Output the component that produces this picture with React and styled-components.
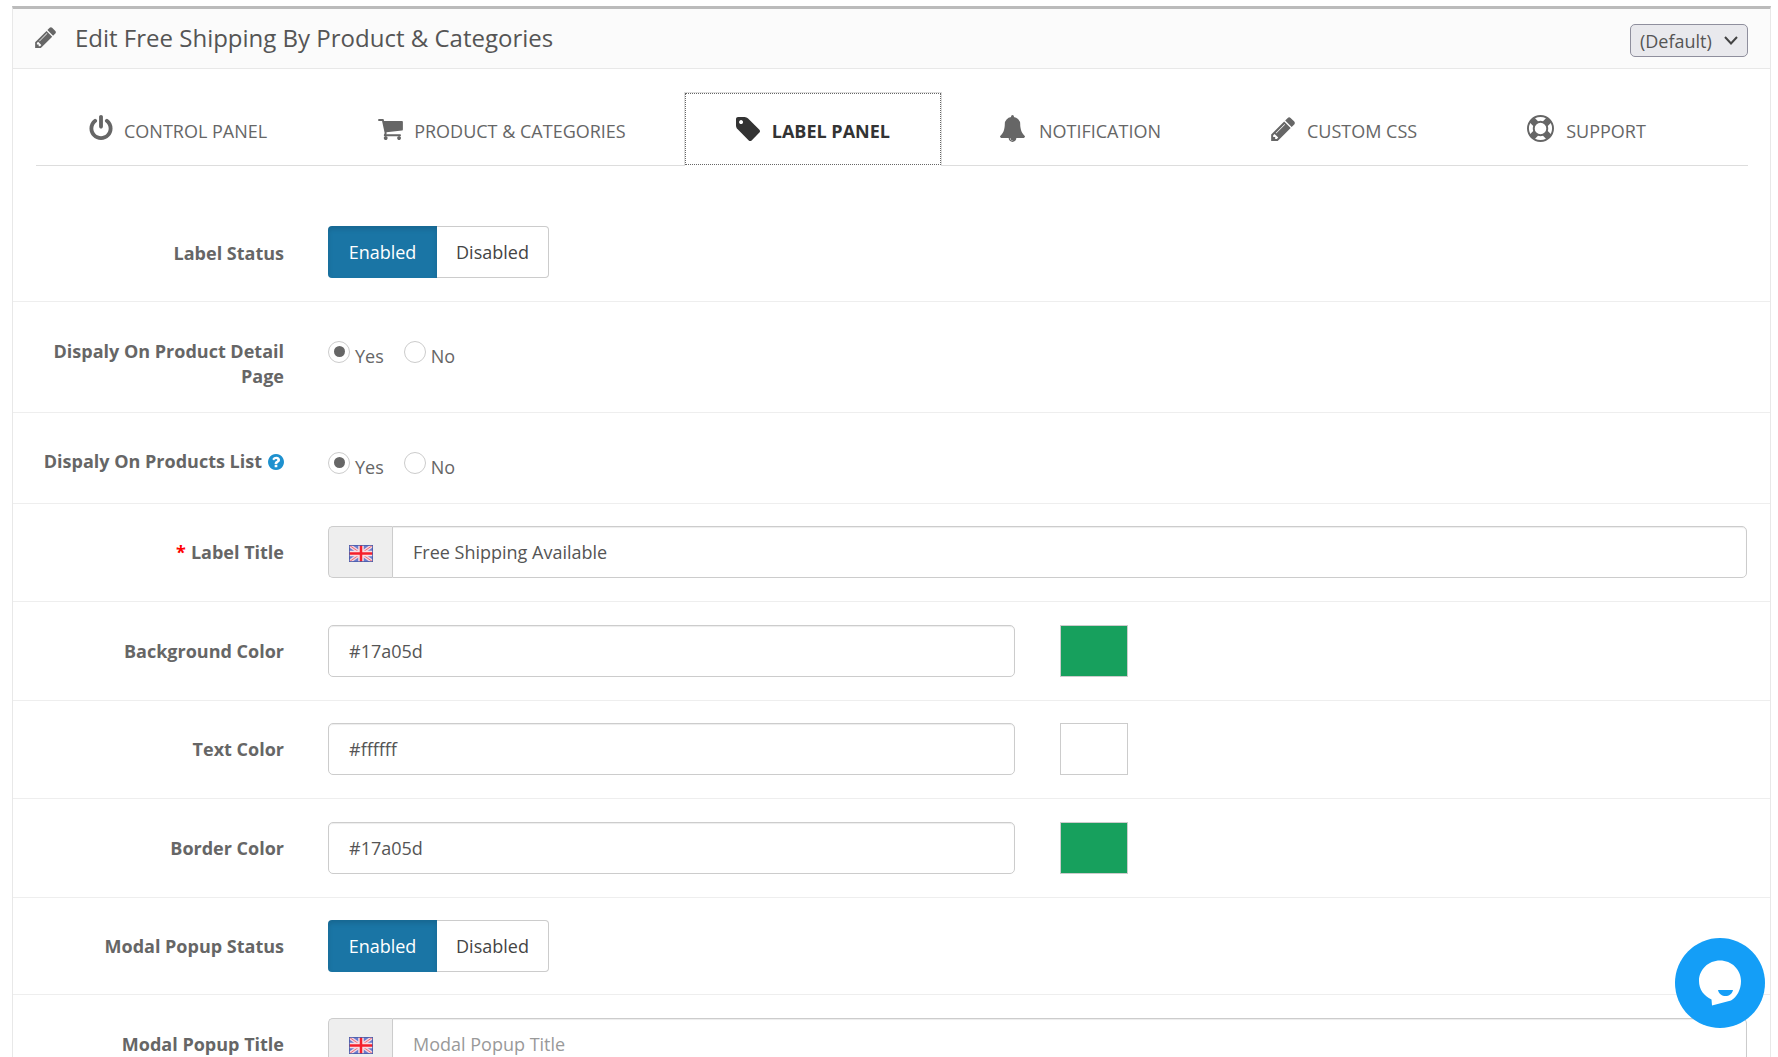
import React from "react";
import styled, { createGlobalStyle } from "styled-components";

const GlobalStyle = createGlobalStyle`
  html, body {
    margin: 0;
    padding: 0;
    background: #fff;
    overflow: hidden;
  }
  body {
    font-family: "Open Sans", "Noto Sans", sans-serif;
    color: #666;
  }
  * { box-sizing: border-box; }
`;

const Page = styled.div`
  height: 1057px;
  overflow: hidden;
  padding: 6px 7px 0 12px;
`;

const Panel = styled.div`
  border: 1px solid #e8e8e8;
  border-top: 3px solid #bbb;
  background: #fff;
`;

const PanelHeading = styled.div`
  height: 60px;
  display: flex;
  align-items: center;
  justify-content: space-between;
  padding: 0 22px 3px 22px;
  background: #fbfbfb;
  border-bottom: 1px solid #e8e8e8;
`;

const PanelTitle = styled.h3`
  margin: 0;
  display: flex;
  align-items: center;
  gap: 19px;
  font-size: 24px;
  font-weight: 400;
  color: #555;
`;

const StoreSelect = styled.div`
  width: 118px;
  height: 33px;
  margin-top: 7px;
  display: flex;
  align-items: center;
  justify-content: space-between;
  padding: 0 9px;
  background: #e9e9ed;
  border: 1px solid #8f8f9d;
  border-radius: 5px;
  font-size: 18px;
  color: #555;
`;

const Tabs = styled.ul`
  list-style: none;
  margin: 0 22px 0 23px;
  padding: 23px 0 0 1px;
  height: 97px;
  display: flex;
  gap: 6px;
  border-bottom: 1px solid #ddd;
`;

const Tab = styled.li`
  height: 74px;
  display: flex;
  align-items: center;
  gap: ${(p) => p.$gap || 11}px;
  padding: 4px 52px 0;
  font-size: 18px;
  color: #666;
  ${(p) =>
    p.$active &&
    `
    color: #333;
    font-weight: 700;
    background: #fff;
    padding: 3px 51px 0;
    border: 1px solid #ddd;
    border-bottom: 0;
    outline: 1px dotted #666;
    outline-offset: -2px;
  `}
`;

const Glyph = styled.svg`
  display: block;
  flex: none;
  fill: currentColor;
  margin-top: ${(p) => p.$shift || 0}px;
`;

const TitleGlyph = styled(Glyph)`
  color: #666;
`;

const HelpGlyph = styled.svg`
  display: inline-block;
  fill: #1e91cf;
  margin-left: 6px;
  vertical-align: -2px;
`;

const Row = styled.div`
  display: grid;
  grid-template-columns: 271px 1fr;
  column-gap: 44px;
  padding: ${(p) => p.$pad || "22px"} 23px ${(p) => p.$padBottom || "22px"} 0;
  align-items: ${(p) => (p.$top ? "start" : "center")};
  border-bottom: 1px solid #eee;
`;

const Label = styled.label`
  display: block;
  text-align: right;
  font-size: 18px;
  line-height: 25px;
  font-weight: 700;
  color: #666;
  padding-left: 20px;
  padding-top: ${(p) => (p.$lift ? 0 : p.$nudge ? 2 : 1)}px;
  ${(p) => p.$lift && `margin-top: -${p.$lift}px;`}
`;

const Required = styled.span`
  color: #f00;
  margin-right: 5px;
`;

const Toggle = styled.div`
  display: flex;
  width: 221px;
  height: 52px;
`;

const ToggleButton = styled.div`
  display: flex;
  align-items: center;
  justify-content: center;
  font-size: 18px;
  ${(p) =>
    p.$on
      ? `
    width: 109px;
    background: #1a75a5;
    color: #fff;
    border-radius: 4px 0 0 4px;
    box-shadow: inset 0 3px 5px rgba(0, 0, 0, 0.125);
  `
      : `
    width: 112px;
    background: #fff;
    color: #444;
    border: 1px solid #ccc;
    border-left: 0;
    border-radius: 0 4px 4px 0;
  `}
`;

const RadioGroup = styled.div`
  display: flex;
  height: 30px;
  gap: 20px;
  font-size: 18px;
  color: #666;
`;

const RadioOption = styled.div`
  display: flex;
  gap: 5px;
  span {
    line-height: 25px;
    margin-top: 4px;
  }
`;

const RadioCircle = styled.div`
  width: 22px;
  height: 22px;
  margin-top: 1px;
  border-radius: 50%;
  border: 1px solid #ccc;
  background: #fff;
  position: relative;
  ${(p) =>
    p.$checked &&
    `
    &::after {
      content: "";
      position: absolute;
      left: 5px;
      top: 4px;
      width: 11px;
      height: 11px;
      border-radius: 50%;
      background: #666;
    }
  `}
`;

const InputGroup = styled.div`
  display: flex;
  height: 52px;
`;

const Addon = styled.div`
  width: 64px;
  padding-top: 2px;
  display: flex;
  align-items: center;
  justify-content: center;
  background: #eee;
  border: 1px solid #ccc;
  border-right: 0;
  border-radius: 5px 0 0 5px;
`;

const TextBox = styled.div`
  flex: ${(p) => (p.$half ? "0 0 687px" : "1")};
  display: flex;
  align-items: center;
  padding: 0 20px;
  background: #fff;
  border: 1px solid #ccc;
  border-radius: ${(p) => (p.$half ? "5px" : "0 5px 5px 0")};
  box-shadow: inset 0 1px 1px rgba(0, 0, 0, 0.075);
  font-size: 18px;
  color: ${(p) => (p.$placeholder ? "#999" : "#555")};
`;

const Swatch = styled.div`
  width: 68px;
  height: 52px;
  margin-left: 45px;
  background: ${(p) => p.$color};
  border: 1px solid #ccc;
`;

const ChatBubble = styled.div`
  position: fixed;
  left: 1675px;
  top: 938px;
  width: 90px;
  height: 90px;
  border-radius: 50%;
  background: #149ef7;
  display: flex;
  align-items: center;
  justify-content: center;
`;

const FlagSvg = styled.svg`
  filter: blur(0.7px);
`;

const icons = {
  power: {
    box: "128 0 1536 1664",
    d: "M1664 896q0 156-61 298t-164 245-245 164-298 61-298-61-245-164-164-245-61-298q0-182 80.5-343t226.500-270q43-32 95.500-25t83.500 50q32 42 24.500 94.500t-49.500 84.500q-98 74-151.500 181t-53.500 228q0 104 40.500 198.500t109.500 163.500 163.500 109.500 198.500 40.500 198.500-40.500 163.500-109.500 109.500-163.500 40.500-198.500q0-121-53.500-228t-151.500-181q-42-32-49.500-84.500t24.500-94.500q31-43 84-50t95 25q146 109 226.500 270t80.500 343zm-640-768v640q0 52-38 90t-90 38-90-38-38-90v-640q0-52 38-90t90-38 90 38 38 90z",
  },
  cart: {
    box: "0 256 1728 1408",
    d: "M704 1536q0 52-38 90t-90 38-90-38-38-90 38-90 90-38 90 38 38 90zm896 0q0 52-38 90t-90 38-90-38-38-90 38-90 90-38 90 38 38 90zm128-1088v512q0 24-16.500 42.500t-40.500 21.500l-1044 122q13 60 13 70 0 16-24 64h920q26 0 45 19t19 45-19 45-45 19h-1024q-26 0-45-19t-19-45q0-11 8-31.500t16-36 21.500-40 15.500-29.500l-177-823h-204q-26 0-45-19t-19-45 19-45 45-19h256q16 0 28.500 6.500t19.500 15.500 13 24.500 8 26 5.500 29.500 4.500 26h1201q26 0 45 19t19 45z",
  },
  tag: {
    box: "0 128 1515 1515",
    d: "M448 448q0-53-37.500-90.500t-90.500-37.500-90.500 37.500-37.500 90.500 37.500 90.500 90.500 37.500 90.500-37.500 37.500-90.500zm1067 576q0 53-37 90l-491 492q-39 37-91 37-53 0-90-37l-715-716q-38-37-64.500-101t-26.500-117v-416q0-52 38-90t90-38h416q53 0 117 26.500t102 64.500l715 714q37 39 37 91z",
  },
  bell: {
    box: "64 0 1664 1792",
    d: "M912 1696q0-16-16-16-59 0-101.500-42.500t-42.500-101.500q0-16-16-16t-16 16q0 73 51.500 124.500t124.500 51.500q16 0 16-16zm816-288q0 52-38 90t-90 38h-448q0 106-75 181t-181 75-181-75-75-181h-448q-52 0-90-38t-38-90q50-42 91-88t85-119.500 74.500-158.500 50-206 19.500-260q0-152 117-282.500t307-158.500q-8-19-8-39 0-40 28-68t68-28 68 28 28 68q0 20-8 39 190 28 307 158.500t117 282.500q0 139 19.500 260t50 206 74.500 158.500 85 119.500 91 88z",
  },
  pencil: {
    box: "0 128 1515 1536",
    d: "M363 1536l91-91-235-235-91 91v107h128v128h107zm523-928q0-22-22-22-10 0-17 7l-542 542q-7 7-7 17 0 22 22 22 10 0 17-7l542-542q7-7 7-17zm-54-192l416 416-832 832h-416v-416zm683 96q0 53-37 90l-166 166-416-416 166-165q36-38 90-38 53 0 91 38l235 234q37 39 37 91z",
  },
  ring: {
    box: "0 0 1792 1792",
    d: "M896 0q182 0 348 71t286 191 191 286 71 348-71 348-191 286-286 191-348 71-348-71-286-191-191-286-71-348 71-348 191-286 286-191 348-71zm0 128q-190 0-361 90l194 194q82-28 167-28t167 28l194-194q-171-90-361-90zm-678 1129l194-194q-28-82-28-167t28-167l-194-194q-90 171-90 361t90 361zm678 407q190 0 361-90l-194-194q-82 28-167 28t-167-28l-194 194q171 90 361 90zm0-384q159 0 271.500-112.500t112.500-271.500-112.500-271.500-271.500-112.500-271.500 112.500-112.500 271.500 112.500 271.500 271.500 112.500zm484-217l194 194q90-171 90-361t-90-361l-194 194q28 82 28 167t-28 167z",
  },
  help: {
    box: "128 128 1536 1536",
    d: "M1024 1376v-192q0-14-9-23t-23-9h-192q-14 0-23 9t-9 23v192q0 14 9 23t23 9h192q14 0 23-9t9-23zm256-672q0-88-55.500-163t-138.500-116-170-41q-243 0-371 213-15 24 8 42l132 100q7 6 19 6 16 0 25-12 53-68 86-92 34-24 86-24 48 0 85.500 26t37.500 59q0 38-20 61t-68 45q-63 28-115.500 86.500t-52.500 125.500v36q0 14 9 23t23 9h192q14 0 23-9t9-23q0-19 21.500-49.500t54.500-49.500q32-18 49-28.500t46-35 44.500-48 28-60.500 12.500-81zm384 192q0 209-103 385.500t-279.500 279.500-385.500 103-385.500-103-279.500-279.500-103-385.500 103-385.500 279.500-279.500 385.500-103 385.500 103 279.500 279.500 103 385.500z",
  },
};

const Flag = () => (
  <FlagSvg width="24" height="17" viewBox="0 0 24 17">
    <rect width="24" height="17" fill="#6a7ccd" />
    <path d="M0 0L24 17M24 0L0 17" stroke="#f2d6e0" strokeWidth="3.5" />
    <path d="M0 0L24 17M24 0L0 17" stroke="#ee6a78" strokeWidth="1" />
    <path d="M12 0V17M0 8.500H24" stroke="#f8dfe4" strokeWidth="5.500" />
    <path d="M12 0V17M0 8.500H24" stroke="#f5202c" strokeWidth="2.500" />
    <rect x="0.400" y="0.400" width="23.200" height="16.200" fill="none" stroke="#4a5aa8" strokeWidth="0.800" />
  </FlagSvg>
);

const Chevron = () => (
  <svg width="14" height="9" viewBox="0 0 14 9" fill="none" stroke="#444" strokeWidth="2">
    <path d="M1 1L7 7.500L13 1" />
  </svg>
);

const ChatIcon = () => (
  <svg width="90" height="90" viewBox="0 0 90 90">
    <path
      d="M45 22.500C33.400 22.500 24 31.500 24 43C24 51.500 29 58 36.500 61.500L37 67.500L56 62.500C62 59 66 51.500 66 43C66 31.500 56.600 22.500 45 22.500Z"
      fill="#fff"
    />
    <path d="M43 52H58C57 56 54 58 50.500 58C47 58 44 56 43 52Z" fill="#149ef7" />
  </svg>
);

const tabs = [
  { icon: icons.power, w: 24, h: 25, shift: -7, text: "CONTROL PANEL" },
  { icon: icons.cart, w: 26, h: 21, shift: -3, text: "PRODUCT & CATEGORIES" },
  { icon: icons.tag, w: 24, h: 24, shift: -5, gap: 12, text: "LABEL PANEL", active: true },
  { icon: icons.bell, w: 25, h: 27, shift: -5, gap: 14, text: "NOTIFICATION" },
  { icon: icons.pencil, w: 24, h: 24, shift: -5, gap: 12, text: "CUSTOM CSS" },
  { icon: icons.ring, w: 27, h: 27, shift: -5, gap: 12, text: "SUPPORT" },
];

const ToggleField = () => (
  <Toggle>
    <ToggleButton $on>Enabled</ToggleButton>
    <ToggleButton>Disabled</ToggleButton>
  </Toggle>
);

const YesNo = () => (
  <RadioGroup>
    <RadioOption>
      <RadioCircle $checked />
      <span>Yes</span>
    </RadioOption>
    <RadioOption>
      <RadioCircle />
      <span>No</span>
    </RadioOption>
  </RadioGroup>
);

const ColorField = ({ value, color }) => (
  <InputGroup>
    <TextBox $half>{value}</TextBox>
    <Swatch $color={color} />
  </InputGroup>
);

const App = () => (
  <Page>
    <GlobalStyle />
    <Panel>
      <PanelHeading>
        <PanelTitle>
          <TitleGlyph width="21" height="21" viewBox={icons.pencil.box}>
            <path d={icons.pencil.d} />
          </TitleGlyph>
          Edit Free Shipping By Product &amp; Categories
        </PanelTitle>
        <StoreSelect>
          (Default)
          <Chevron />
        </StoreSelect>
      </PanelHeading>
      <Tabs>
        {tabs.map(({ icon, w, h, shift, gap, text, active }) => (
          <Tab key={text} $active={active} $gap={gap}>
            <Glyph width={w} height={h} viewBox={icon.box} $shift={shift}>
              <path d={icon.d} />
            </Glyph>
            {text}
          </Tab>
        ))}
      </Tabs>
      <Row $pad="60px" $padBottom="23px">
        <Label $nudge>Label Status</Label>
        <ToggleField />
      </Row>
      <Row $top $pad="38px" $padBottom="23px">
        <Label $lift={1}>Dispaly On Product Detail Page</Label>
        <YesNo />
      </Row>
      <Row $top $pad="38px">
        <Label $lift={2}>
          Dispaly On Products List
          <HelpGlyph width="16" height="16" viewBox={icons.help.box}>
            <path d={icons.help.d} />
          </HelpGlyph>
        </Label>
        <YesNo />
      </Row>
      <Row $pad="22px" $padBottom="23px">
        <Label>
          <Required>*</Required>
          Label Title
        </Label>
        <InputGroup>
          <Addon>
            <Flag />
          </Addon>
          <TextBox>Free Shipping Available</TextBox>
        </InputGroup>
      </Row>
      <Row $pad="23px" $padBottom="23px">
        <Label>Background Color</Label>
        <ColorField value="#17a05d" color="#17a05d" />
      </Row>
      <Row $pad="22px" $padBottom="23px">
        <Label>Text Color</Label>
        <ColorField value="#ffffff" color="#ffffff" />
      </Row>
      <Row $pad="23px" $padBottom="23px">
        <Label>Border Color</Label>
        <ColorField value="#17a05d" color="#17a05d" />
      </Row>
      <Row>
        <Label>Modal Popup Status</Label>
        <ToggleField />
      </Row>
      <Row $pad="23px" $padBottom="23px">
        <Label>Modal Popup Title</Label>
        <InputGroup>
          <Addon>
            <Flag />
          </Addon>
          <TextBox $placeholder>Modal Popup Title</TextBox>
        </InputGroup>
      </Row>
    </Panel>
    <ChatBubble>
      <ChatIcon />
    </ChatBubble>
  </Page>
);

export default App;
